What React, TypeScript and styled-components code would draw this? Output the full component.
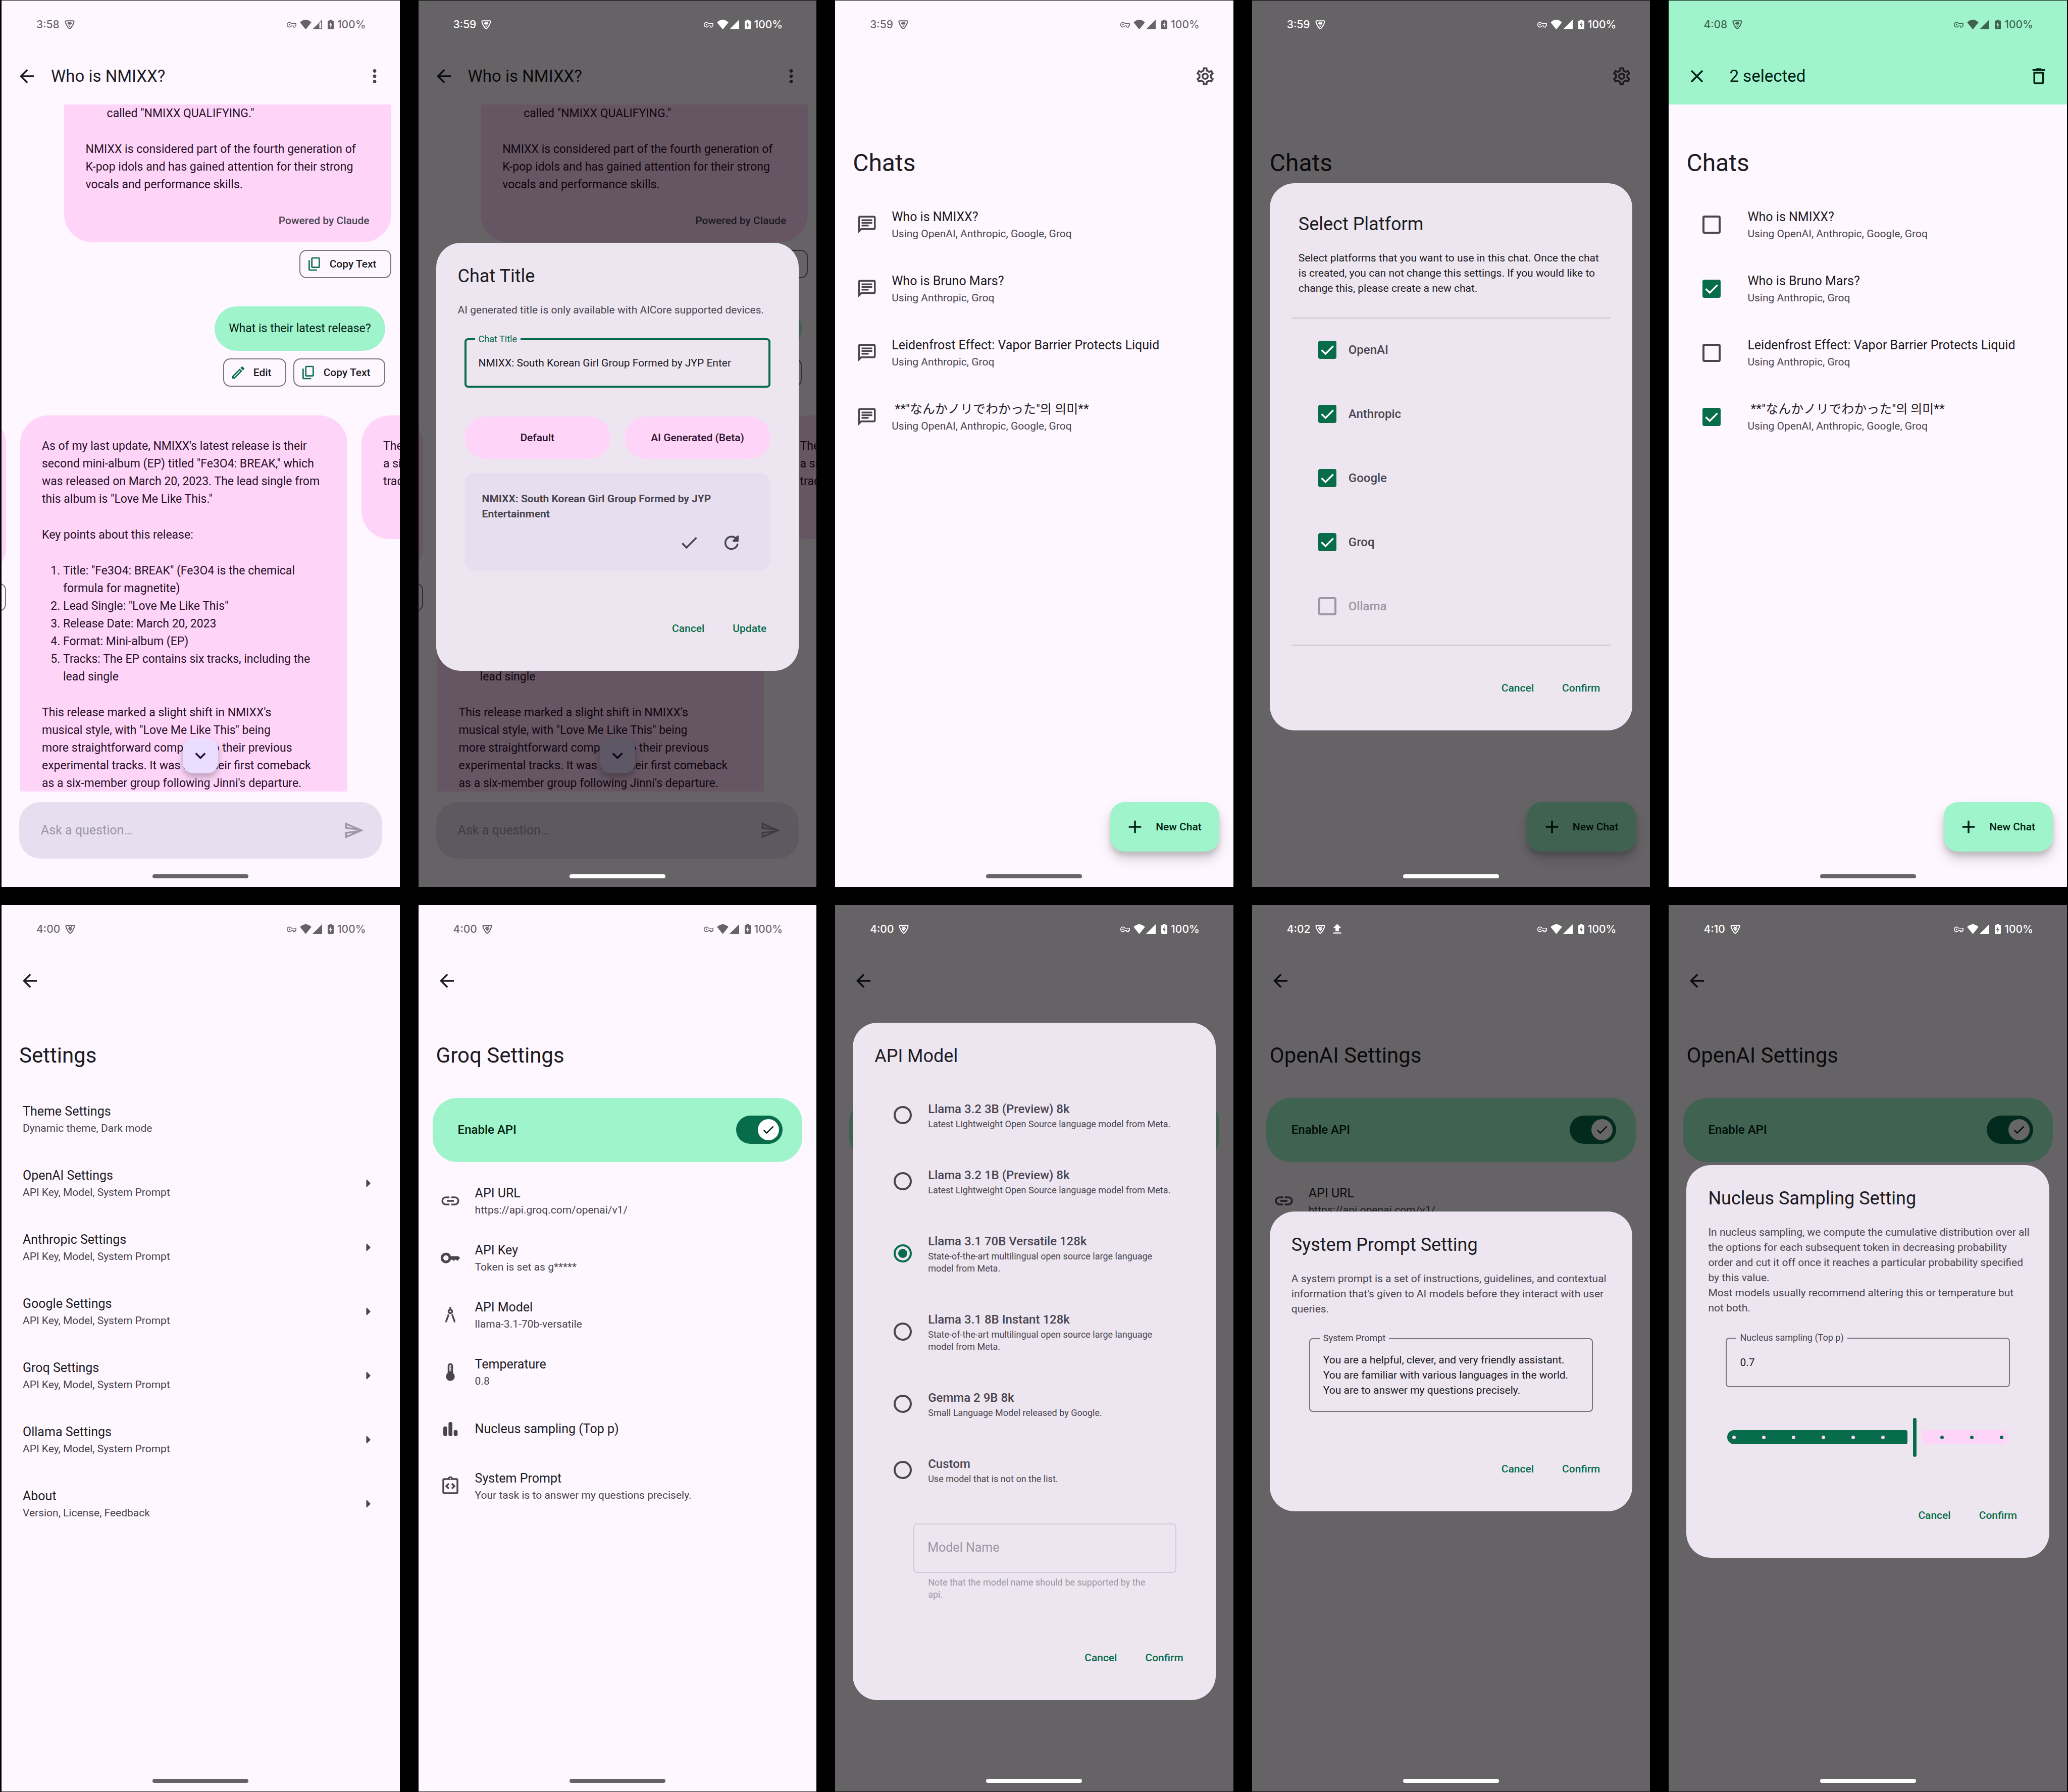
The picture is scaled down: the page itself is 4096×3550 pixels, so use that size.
import React, { useId } from 'react';
import styled, { createGlobalStyle, css } from 'styled-components';
import {
  MdAdd, MdArchitecture, MdArrowBack, MdCheck, MdClose,
  MdKeyboardArrowDown, MdLink, MdMoreVert, MdOutlineChat, MdOutlineDelete, MdOutlineEdit,
  MdOutlineIntegrationInstructions, MdOutlineSend, MdOutlineSettings, MdFileUpload,
} from 'react-icons/md';

const color = {
  surface: '#fef7ff',
  dialog: '#ede6f0',
  field: '#e7dfef',
  ink: '#1c1b1f',
  inkSoft: '#49454f',
  outline: '#79747e',
  divider: '#cac4d0',
  faint: '#9d96a4',
  primary: '#076c4a',
  mint: '#9ff4cb',
  onMint: '#002114',
  pink: '#fed5f8',
  onPink: '#29112a',
  lilac: '#eaddff',
};

const Global = createGlobalStyle`
  *, *::before, *::after { box-sizing: border-box; }
  body { margin: 0; background: #000; color: ${color.ink}; font-family: Roboto, 'Noto Sans CJK JP', 'Noto Sans CJK KR', sans-serif; }
  h1, h2, p, ul, ol { margin: 0; padding: 0; font-weight: 400; }
  button, input, textarea { font: inherit; color: inherit; border: 0; background: none; padding: 0; margin: 0; }
  svg { display: block; flex: none; }
`;

/* ---------- type ---------- */
const body = css`font-size: 23px; line-height: 35px;`;
const title = css`font-size: 25px; line-height: 36px;`;
const label = css`font-size: 21px; line-height: 30px; font-weight: 500;`;
const support = css`font-size: 21px; line-height: 30px;`;
const small = css`font-size: 18px; line-height: 24px;`;

/* ---------- frame ---------- */
const Gallery = styled.main`
  min-height: 100vh;
  padding: 1px 2px 1px 3px;
  display: grid;
  grid-template-columns: repeat(5, minmax(0, 1fr));
  grid-auto-rows: 1fr;
  gap: 36px 37px;
`;
const Phone = styled.section`
  position: relative;
  display: flex;
  flex-direction: column;
  overflow: hidden;
  background: ${color.surface};
`;
const Status = styled.header<{ $light?: boolean; $tint?: boolean }>`
  position: relative;
  z-index: 2;
  height: 94px;
  padding: 1px 67px 0 69px;
  display: flex;
  align-items: center;
  font: 500 21px Inter, sans-serif;
  color: ${p => (p.$light ? '#fff' : 'rgba(0, 0, 0, 0.6)')};
  background: ${p => (p.$tint ? color.mint : 'transparent')};
`;
const StatusLeft = styled.div`
  display: flex;
  align-items: center;
  gap: 10px;
  margin-right: auto;
`;
const StatusRight = styled.div`
  display: flex;
  align-items: center;
  gap: 7px;
`;
const SignalPair = styled.span`
  display: flex;
  align-items: center;
  gap: 2px;
  margin-right: 4px;
`;
const Content = styled.div`
  flex: 1;
  display: flex;
  flex-direction: column;
`;
const Nav = styled.footer<{ $light?: boolean }>`
  position: relative;
  z-index: 2;
  height: 42px;
  display: grid;
  place-items: center;
  &::after {
    content: '';
    width: 190px;
    height: 8px;
    border-radius: 4px;
    background: ${p => (p.$light ? '#fff' : '#666366')};
  }
`;
const Scrim = styled.div`
  position: absolute;
  inset: 0;
  z-index: 1;
  padding: 94px 35px 42px;
  display: flex;
  align-items: center;
  background: rgba(0, 0, 0, 0.6);
`;

/* ---------- drawn icons ---------- */
type IconProps = { size?: number };
const VpnShield = () => (
  <svg width="20" height="20" viewBox="0 0 24 24" fill="none" stroke="currentColor" strokeWidth="2.4" strokeLinejoin="round">
    <path d="M3.600 2.600h16.800c1.600 0 2.300 1 1.800 2.500-1.900 6.800-4.700 12-9 16-.8.7-1.600.7-2.400 0-4.300-4-7.100-9.200-9-16-.5-1.500.2-2.500 1.800-2.500z" />
    <path d="M8.500 5l1.300 2.200h4.400L15.500 5M7 9.300h10M8.500 12.500h7M10.500 15.500h3" strokeWidth="2.100" />
  </svg>
);
const TunnelKey = () => (
  <svg width="19" height="12" viewBox="0 0 26 16" fill="none" stroke="currentColor" strokeWidth="2.200" strokeLinejoin="round">
    <path d="M12.800 5A6.300 6.300 0 1 0 12.800 11H17.500v3.500h5V11h2.300V5z" />
    <circle cx="7.300" cy="8" r="2" fill="currentColor" stroke="none" />
  </svg>
);
const Wifi = () => (
  <svg width="23" height="19" viewBox="0 0 32 27" fill="currentColor">
    <path d="M.6 6.600Q16-6.800 31.400 6.600q.8.800.1 1.700L17 26.300q-1 1-2 0L.5 8.300q-.7-.9.1-1.700z" />
  </svg>
);
const Cell = ({ weak }: { weak?: boolean }) => (
  <svg width="19" height="19" viewBox="0 0 26 26" fill="currentColor" fillRule="evenodd">
    <path d={weak ? 'M0 26L26 0V26zM18.500 10v13.500h5V5z' : 'M0 26L26 0V26z'} />
  </svg>
);
const Battery = () => (
  <svg width="12" height="19" viewBox="0 0 17 27" fill="currentColor" fillRule="evenodd">
    <path d="M5 0h7v2.500h3a2 2 0 0 1 2 2V25a2 2 0 0 1-2 2H2a2 2 0 0 1-2-2V4.500a2 2 0 0 1 2-2h3zM9.300 6.200L4.200 15.600h3.300V23l5-9.400H9.300z" />
  </svg>
);
const CopyIcon = ({ size = 32 }: IconProps) => (
  <svg width={size} height={size} viewBox="0 0 24 24" fill="currentColor" fillRule="evenodd">
    <path d="M9 2h9a2 2 0 0 1 2 2v12a2 2 0 0 1-2 2H9a2 2 0 0 1-2-2V4a2 2 0 0 1 2-2zm0 2v12h9V4zM4 6a1 1 0 0 1 1 1v13h10a1 1 0 0 1 0 2H5a2 2 0 0 1-2-2V7a1 1 0 0 1 1-1z" />
  </svg>
);
const RefreshIcon = ({ size = 42 }: IconProps) => (
  <svg width={size} height={size} viewBox="0 0 24 24" fill="none" stroke="currentColor" strokeWidth="2" strokeLinecap="round">
    <path d="M18.300 9.200A7 7 0 1 0 18.700 14" />
    <path d="M20 4.800v5.200a1 1 0 0 1-1 1h-5c-.9 0-1.300-1-.7-1.600l5-5.200c.6-.6 1.700-.2 1.700.6z" fill="currentColor" stroke="none" />
  </svg>
);
const KeyIcon = ({ size = 42 }: IconProps) => (
  <svg width={size} height={size} viewBox="0 0 24 24" fill="currentColor" fillRule="evenodd">
    <path d="M7 6a6 6 0 0 1 5.650 4H21l2 2-3 3.300-2-1.600-2 1.600-2-1.300h-1.350A6 6 0 1 1 7 6zm0 3a3 3 0 1 0 0 6 3 3 0 0 0 0-6z" />
  </svg>
);
const ThermoIcon = ({ size = 42 }: IconProps) => (
  <svg width={size} height={size} viewBox="0 0 24 24" fill="currentColor" fillRule="evenodd">
    <path d="M12 2a3 3 0 0 1 3 3v8a5 5 0 1 1-6 0V5a3 3 0 0 1 3-3zm-1 3v6h2v-1h-1V9h1V7h-1V6h1V5a1 1 0 0 0-2 0z" />
  </svg>
);
const BarsIcon = ({ size = 42 }: IconProps) => (
  <svg width={size} height={size} viewBox="0 0 24 24" fill="currentColor">
    <rect x="4" y="9" width="4.400" height="11" rx="2" />
    <rect x="9.900" y="4" width="4.400" height="16" rx="2" />
    <rect x="15.800" y="13" width="4.400" height="7" rx="2" />
  </svg>
);
const ForwardIcon = ({ size = 42 }: IconProps) => (
  <svg width={size} height={size} viewBox="0 0 24 24" fill="currentColor">
    <path d="M10 15.600V8.400c0-.5.600-.7.900-.4l3.500 3.500c.3.300.3.700 0 1l-3.500 3.500c-.3.300-.9.100-.9-.4z" />
  </svg>
);

/* ---------- app bars ---------- */
const AppBar = styled.div<{ $inset?: number; $tint?: boolean }>`
  height: 112px;
  padding: 0 ${p => p.$inset ?? 14}px;
  display: flex;
  align-items: center;
  background: ${p => (p.$tint ? color.mint : 'transparent')};
  color: ${p => (p.$tint ? color.onMint : color.ink)};
`;
const BarTitle = styled.h1<{ $gap: number }>`
  flex: 1;
  margin-left: ${p => p.$gap}px;
  font-size: 33px;
  line-height: 48px;
`;
const IconButton = styled.button<{ $push?: boolean; $soft?: boolean }>`
  width: 84px;
  height: 84px;
  display: grid;
  place-items: center;
  margin-left: ${p => (p.$push ? 'auto' : '0')};
  color: ${p => (p.$soft ? color.inkSoft : 'inherit')};
`;
const HomeTitle = styled.h1`
  padding: 86px 35px 28px;
  font-size: 48px;
  line-height: 60px;
`;
const SettingsTitle = styled.h1`
  padding: 65px 35px 35px;
  font-size: 42px;
  line-height: 54px;
`;

/* ---------- rows ---------- */
const List = styled.ul<{ $top?: number }>`
  list-style: none;
  padding-top: ${p => p.$top ?? 0}px;
`;
const Row = styled.li<{ $height: number }>`
  min-height: ${p => p.$height}px;
  padding: 0 42px;
  display: flex;
  align-items: center;
  gap: 28px;
  color: ${color.inkSoft};
`;
const RowText = styled.div`
  flex: 1;
  display: flex;
  flex-direction: column;
`;
const RowTitle = styled.span`
  ${title}
  color: ${color.ink};
  white-space: pre;
`;
const RowSupport = styled.span`
  ${support}
`;

/* ---------- controls ---------- */
const Overlay = styled.span<{ $wide?: boolean }>`
  display: grid;
  place-items: center;
  width: ${p => (p.$wide ? '86px' : '36px')};
  & > * { grid-area: 1 / 1; }
  svg { pointer-events: none; }
`;
const Tick = styled.input`
  appearance: none;
  width: 36px;
  height: 36px;
  border: 4px solid ${color.inkSoft};
  border-radius: 4px;
  &:checked { background: ${color.primary}; border-color: ${color.primary}; }
  &:disabled { border-color: ${color.faint}; }
`;
const CheckMark = () => (
  <svg width="36" height="36" viewBox="0 0 20 20" fill="none" stroke="#fff" strokeWidth="1.900">
    <path d="M3.600 10.200l4.400 4.200 8.500-8.500" />
  </svg>
);
const CheckBox = ({ id, checked, disabled, wide }: { id: string; checked: boolean; disabled?: boolean; wide?: boolean }) => (
  <Overlay $wide={wide}>
    <Tick type="checkbox" id={id} defaultChecked={checked} disabled={disabled} />
    {checked && <CheckMark />}
  </Overlay>
);
const RadioDot = styled.input`
  appearance: none;
  flex: none;
  width: 36px;
  height: 36px;
  padding: 5px;
  border: 4px solid ${color.inkSoft};
  border-radius: 50%;
  background-clip: content-box;
  &:checked { border-color: ${color.primary}; background-color: ${color.primary}; }
`;
const SwitchBox = styled.span`
  display: grid;
  align-items: center;
  & > * { grid-area: 1 / 1; }
`;
const SwitchTrack = styled.input`
  appearance: none;
  width: 92px;
  height: 56px;
  border-radius: 28px;
  background: ${color.primary};
`;
const SwitchThumb = styled.span`
  width: 42px;
  height: 42px;
  margin-right: 7px;
  justify-self: end;
  display: grid;
  place-items: center;
  border-radius: 50%;
  background: #fff;
  color: ${color.onMint};
  pointer-events: none;
`;
const EnableCard = styled.div`
  margin: 22px 28px 0;
  height: 127px;
  padding: 0 39px 1px 50px;
  display: flex;
  align-items: center;
  justify-content: space-between;
  border-radius: 49px;
  background: ${color.mint};
  color: ${color.onMint};
  font-size: 24px;
  font-weight: 500;
`;
const FabButton = styled.button`
  align-self: flex-end;
  margin: auto 28px 28px 0;
  height: 98px;
  padding: 0 35px 0 28px;
  display: flex;
  align-items: center;
  gap: 20px;
  border-radius: 28px;
  background: ${color.mint};
  color: ${color.onMint};
  box-shadow: 0 14px 24px rgba(0, 0, 0, 0.17), 0 8px 10px rgba(0, 0, 0, 0.12);
  ${label}
`;

/* ---------- chat ---------- */
const Thread = styled.div`
  position: relative;
  flex: 1;
  contain: size;
  overflow: hidden;
  margin-bottom: 21px;
`;
const Bubble = styled.article<{ $cut?: boolean; $long?: boolean }>`
  flex: none;
  width: 648px;
  padding: ${p => (p.$cut ? 0 : 43)}px 43px ${p => (p.$long ? 168 : 28)}px;
  border-radius: ${p => (p.$cut ? '0 0 56px 56px' : '56px')};
  background: ${color.pink};
  color: ${color.onPink};
  ${body}
  white-space: pre;
  ol { padding-left: 42px; }
  p + p, p + ol, ol + p { margin-top: 36px; }
`;
const Continued = styled.p`
  padding-left: 42px;
`;
const Credit = styled.footer`
  margin-top: 39px;
  text-align: right;
  color: ${color.inkSoft};
  ${label}
`;
const Outgoing = styled.div<{ $right: number; $bottom: number }>`
  display: flex;
  flex-direction: column;
  align-items: flex-end;
  gap: 15px;
  padding-right: ${p => p.$right}px;
  margin-bottom: ${p => p.$bottom}px;
`;
const Question = styled.p`
  padding: 26px 28px;
  border-radius: 44px;
  background: ${color.mint};
  color: ${color.onMint};
  font-size: 23px;
  line-height: 36px;
`;
const Chips = styled.div`
  display: flex;
  gap: 14px;
`;
const Chip = styled.button`
  height: 56px;
  padding: 0 27px 0 12px;
  display: flex;
  align-items: center;
  gap: 14px;
  border: 2px solid ${color.outline};
  border-radius: 14px;
  svg { color: ${color.primary}; }
  ${label}
`;
const Pager = styled.div`
  display: flex;
  align-items: flex-start;
  gap: 28px;
  margin-left: -639px;
`;
const Page = styled.div`
  flex: none;
  width: 648px;
  display: flex;
  flex-direction: column;
  align-items: flex-end;
  gap: 15px;
`;
const BlankBubble = styled(Bubble)`
  height: 317px;
`;
const ScrollDown = styled.button`
  position: absolute;
  left: 50%;
  bottom: 36px;
  width: 70px;
  height: 70px;
  margin-left: -35px;
  display: grid;
  place-items: center;
  border-radius: 21px;
  background: ${color.lilac};
  color: #21103f;
  box-shadow: 0 8px 14px rgba(0, 0, 0, 0.25);
`;
const Composer = styled.form`
  height: 112px;
  margin: 0 35px 14px;
  padding: 0 35px 0 43px;
  display: flex;
  align-items: center;
  border-radius: 42px;
  background: ${color.field};
  color: ${color.faint};
  input { flex: 1; min-width: 0; ${title} }
  input::placeholder { color: ${color.faint}; opacity: 1; }
`;

/* ---------- dialogs ---------- */
const Dialog = styled.div`
  flex: 1;
  min-width: 0;
  padding: 42px 43px;
  border-radius: 49px;
  background: ${color.dialog};
  color: ${color.inkSoft};
`;
const DialogTitle = styled.h2<{ $pad?: boolean }>`
  margin: ${p => (p.$pad ? '15px 14px 28px' : '0 0 28px')};
  font-size: 36px;
  line-height: 48px;
  color: ${color.ink};
`;
const DialogText = styled.p<{ $pad?: boolean; $gap?: number }>`
  ${support}
  white-space: pre;
  margin: 0 ${p => (p.$pad ? 14 : 0)}px ${p => p.$gap ?? 43}px;
  color: ${p => (p.$pad ? color.ink : color.inkSoft)};
`;
const Actions = styled.div<{ $top: number }>`
  margin-top: ${p => p.$top}px;
  display: flex;
  justify-content: flex-end;
  gap: 14px;
`;
const TextButton = styled.button`
  height: 84px;
  padding: 0 21px;
  color: ${color.primary};
  ${label}
`;
const FieldBox = styled.div<{ $left: number; $right: number; $active?: boolean; $off?: boolean }>`
  position: relative;
  display: flex;
  margin: 0 ${p => p.$right}px 0 ${p => p.$left}px;
  min-height: 98px;
  padding: ${p => (p.$active ? 24 : 26)}px;
  border: ${p => (p.$active ? 4 : 2)}px solid ${p => (p.$active ? color.primary : p.$off ? '#d3ccd8' : color.outline)};
  border-radius: 7px;
  label {
    position: absolute;
    top: -14px;
    left: ${p => (p.$active ? 17 : 19)}px;
    padding: 0 7px;
    background: ${color.dialog};
    color: ${p => (p.$active ? color.primary : color.inkSoft)};
    ${small}
  }
  input, textarea {
    flex: 1;
    min-width: 0;
    resize: none;
    overflow: hidden;
    color: ${color.ink};
    outline: none;
    ${support}
  }
  input::placeholder { color: ${color.faint}; opacity: 1; font-size: 25px; }
`;
const Helper = styled.p`
  margin: 7px 35px 0 106px;
  color: ${color.faint};
  ${small}
`;
const Pair = styled.div`
  display: grid;
  grid-template-columns: 1fr 1fr;
  gap: 28px;
  margin: 57px 13px 28px;
`;
const TonalButton = styled.button`
  height: 84px;
  border-radius: 42px;
  background: ${color.pink};
  color: ${color.onPink};
  ${label}
`;
const Suggestion = styled.div`
  margin: 0 13px;
  padding: 36px 35px 14px;
  border-radius: 21px;
  background: ${color.field};
  ${support}
  font-weight: 700;
  white-space: pre;
`;
const SuggestionActions = styled.div`
  display: flex;
  justify-content: flex-end;
`;
const Rule = styled.hr`
  height: 2px;
  margin: 0;
  border: 0;
  background: ${color.divider};
`;
const Platforms = styled.ul`
  list-style: none;
  padding: 0 0 11px 53px;
`;
const Platform = styled.li<{ $off?: boolean }>`
  height: 127px;
  padding-bottom: 4px;
  display: flex;
  align-items: center;
  gap: 24px;
  font-size: 24px;
  font-weight: 500;
  color: ${p => (p.$off ? color.faint : color.inkSoft)};
`;
const Models = styled.ul`
  list-style: none;
  margin-bottom: 40px;
`;
const Model = styled.li`
  padding: 35px 0 36px 38px;
  display: flex;
  align-items: center;
  gap: 32px;
  label { display: flex; flex-direction: column; }
`;
const ModelName = styled.span`
  font-size: 24px;
  line-height: 36px;
  font-weight: 500;
`;
const ModelNote = styled.span`
  ${small}
  white-space: pre;
`;
const SliderBox = styled.div`
  position: relative;
  height: 84px;
  margin: 57px 38px 0;
  display: grid;
  grid-template-columns: 356fr 7px 171fr;
  align-items: center;
  gap: 11px;
  input { position: absolute; inset: 0; width: 100%; opacity: 0; }
`;
const Track = styled.span<{ $active?: boolean }>`
  height: 28px;
  padding: 0 10px;
  display: flex;
  align-items: center;
  gap: 52px;
  justify-content: ${p => (p.$active ? 'flex-start' : 'flex-end')};
  border-radius: ${p => (p.$active ? '14px 4px 4px 14px' : '4px 14px 14px 4px')};
  background: ${p => (p.$active ? color.primary : color.pink)};
  color: ${p => (p.$active ? color.pink : color.primary)};
`;
const Stop = styled.i`
  width: 7px;
  height: 7px;
  border-radius: 50%;
  background: currentColor;
`;
const Handle = styled.span`
  height: 77px;
  border-radius: 4px;
  background: ${color.primary};
`;

/* ---------- composed parts ---------- */
type ShellProps = {
  time: string;
  light?: boolean;
  tint?: boolean;
  upload?: boolean;
  weak?: boolean;
  dialog?: React.ReactNode;
  children: React.ReactNode;
};
const Shell = ({ time, light, tint, upload, weak, dialog, children }: ShellProps) => (
  <Phone>
    <Status $light={light} $tint={tint}>
      <StatusLeft>
        {time}
        <VpnShield />
        {upload && <MdFileUpload size={27} />}
      </StatusLeft>
      <StatusRight>
        <TunnelKey />
        <SignalPair>
          <Wifi />
          <Cell weak={weak} />
        </SignalPair>
        <Battery />
        100%
      </StatusRight>
    </Status>
    <Content>{children}</Content>
    <Nav $light={light} />
    {dialog && <Scrim>{dialog}</Scrim>}
  </Phone>
);

const DialogActions = ({ top, confirm = 'Confirm' }: { top: number; confirm?: string }) => (
  <Actions $top={top}>
    <TextButton type="button">Cancel</TextButton>
    <TextButton type="button">{confirm}</TextButton>
  </Actions>
);

const CopyChip = () => (
  <Chip type="button"><CopyIcon />Copy Text</Chip>
);

const ChatScreen = () => (
  <>
    <AppBar $inset={8}>
      <IconButton type="button" aria-label="Back"><MdArrowBack size={42} /></IconButton>
      <BarTitle $gap={6}>Who is NMIXX?</BarTitle>
      <IconButton type="button" aria-label="More" $soft><MdMoreVert size={42} /></IconButton>
    </AppBar>
    <Thread>
      <Outgoing $right={17} $bottom={56}>
        <Bubble $cut>
          <Continued>called "NMIXX QUALIFYING."</Continued>
          <p>{'NMIXX is considered part of the fourth generation of\nK-pop idols and has gained attention for their strong\nvocals and performance skills.'}</p>
          <Credit>Powered by Claude</Credit>
        </Bubble>
        <CopyChip />
      </Outgoing>
      <Outgoing $right={29} $bottom={57}>
        <Question>What is their latest release?</Question>
        <Chips>
          <Chip type="button"><MdOutlineEdit size={32} />Edit</Chip>
          <CopyChip />
        </Chips>
      </Outgoing>
      <Pager>
        <Page>
          <BlankBubble as="div" />
          <CopyChip />
        </Page>
        <Bubble $long>
          <p>{'As of my last update, NMIXX\'s latest release is their\nsecond mini-album (EP) titled "Fe3O4: BREAK," which\nwas released on March 20, 2023. The lead single from\nthis album is "Love Me Like This."'}</p>
          <p>Key points about this release:</p>
          <ol>
            <li>{'Title: "Fe3O4: BREAK" (Fe3O4 is the chemical\nformula for magnetite)'}</li>
            <li>Lead Single: "Love Me Like This"</li>
            <li>Release Date: March 20, 2023</li>
            <li>Format: Mini-album (EP)</li>
            <li>{'Tracks: The EP contains six tracks, including the\nlead single'}</li>
          </ol>
          <p>{'This release marked a slight shift in NMIXX\'s\nmusical style, with "Love Me Like This" being\nmore straightforward compared to their previous\nexperimental tracks. It was also their first comeback\nas a six-member group following Jinni\'s departure.'}</p>
        </Bubble>
        <Bubble>
          <p>{'The latest\na single\ntracks'}</p>
          <Credit>Powered by Gemini</Credit>
        </Bubble>
      </Pager>
      <ScrollDown type="button" aria-label="Scroll to bottom"><MdKeyboardArrowDown size={42} /></ScrollDown>
    </Thread>
    <Composer>
      <input type="text" placeholder="Ask a question…" aria-label="Ask a question" />
      <button type="button" aria-label="Send"><MdOutlineSend size={42} /></button>
    </Composer>
  </>
);

const chats = [
  { name: 'Who is NMIXX?', using: 'Using OpenAI, Anthropic, Google, Groq', picked: false },
  { name: 'Who is Bruno Mars?', using: 'Using Anthropic, Groq', picked: true },
  { name: 'Leidenfrost Effect: Vapor Barrier Protects Liquid', using: 'Using Anthropic, Groq', picked: false },
  { name: ' **"なんかノリでわかった"의 의미**', using: 'Using OpenAI, Anthropic, Google, Groq', picked: true },
];

const HomeScreen = ({ selecting }: { selecting?: boolean }) => {
  const id = useId();
  return (
    <>
      <AppBar $tint={selecting}>
        {selecting ? (
          <>
            <IconButton type="button" aria-label="Close"><MdClose size={42} /></IconButton>
            <BarTitle $gap={22}>2 selected</BarTitle>
            <IconButton type="button" aria-label="Delete"><MdOutlineDelete size={42} /></IconButton>
          </>
        ) : (
          <IconButton type="button" aria-label="Settings" $push $soft><MdOutlineSettings size={42} /></IconButton>
        )}
      </AppBar>
      <HomeTitle>Chats</HomeTitle>
      <List>
        {chats.map((chat, i) => (
          <Row key={chat.name} $height={127}>
            {selecting ? <CheckBox id={id + i} checked={chat.picked} wide /> : <MdOutlineChat size={42} />}
            <RowText as={selecting ? 'label' : 'div'} {...(selecting ? { htmlFor: id + i } : {})}>
              <RowTitle>{chat.name}</RowTitle>
              <RowSupport>{chat.using}</RowSupport>
            </RowText>
          </Row>
        ))}
      </List>
      <FabButton type="button"><MdAdd size={42} />New Chat</FabButton>
    </>
  );
};

const BackBar = () => (
  <AppBar>
    <IconButton type="button" aria-label="Back"><MdArrowBack size={42} /></IconButton>
  </AppBar>
);

const settings = [
  ['Theme Settings', 'Dynamic theme, Dark mode'],
  ['OpenAI Settings', 'API Key, Model, System Prompt'],
  ['Anthropic Settings', 'API Key, Model, System Prompt'],
  ['Google Settings', 'API Key, Model, System Prompt'],
  ['Groq Settings', 'API Key, Model, System Prompt'],
  ['Ollama Settings', 'API Key, Model, System Prompt'],
  ['About', 'Version, License, Feedback'],
];

const SettingsScreen = () => (
  <>
    <BackBar />
    <SettingsTitle>Settings</SettingsTitle>
    <List>
      {settings.map(([name, note], i) => (
        <Row key={name} $height={127}>
          <RowText>
            <RowTitle>{name}</RowTitle>
            <RowSupport>{note}</RowSupport>
          </RowText>
          {i > 0 && <ForwardIcon />}
        </Row>
      ))}
    </List>
  </>
);

const PlatformScreen = ({ name, url }: { name: string; url: string }) => {
  const id = useId();
  const rows: [React.ReactNode, string, string?][] = [
    [<MdLink size={42} />, 'API URL', url],
    [<KeyIcon />, 'API Key', 'Token is set as g*****'],
    [<MdArchitecture size={42} />, 'API Model', 'llama-3.1-70b-versatile'],
    [<ThermoIcon />, 'Temperature', '0.8'],
    [<BarsIcon />, 'Nucleus sampling (Top p)'],
    [<MdOutlineIntegrationInstructions size={42} />, 'System Prompt', 'Your task is to answer my questions precisely.'],
  ];
  return (
    <>
      <BackBar />
      <SettingsTitle>{name} Settings</SettingsTitle>
      <EnableCard>
        <label htmlFor={id}>Enable API</label>
        <SwitchBox>
          <SwitchTrack type="checkbox" role="switch" id={id} defaultChecked />
          <SwitchThumb><MdCheck size={28} /></SwitchThumb>
        </SwitchBox>
      </EnableCard>
      <List $top={20}>
        {rows.map(([icon, rowName, note]) => (
          <Row key={rowName} $height={113}>
            {icon}
            <RowText>
              <RowTitle>{rowName}</RowTitle>
              {note && <RowSupport>{note}</RowSupport>}
            </RowText>
          </Row>
        ))}
      </List>
    </>
  );
};

const ChatTitleDialog = () => {
  const id = useId();
  return (
    <Dialog role="dialog" aria-label="Chat Title">
      <DialogTitle>Chat Title</DialogTitle>
      <DialogText $gap={41}>AI generated title is only available with AICore supported devices.</DialogText>
      <FieldBox $left={13} $right={13} $active>
        <label htmlFor={id}>Chat Title</label>
        <input id={id} type="text" defaultValue="NMIXX: South Korean Girl Group Formed by JYP Enter" />
      </FieldBox>
      <Pair>
        <TonalButton type="button">Default</TonalButton>
        <TonalButton type="button">AI Generated (Beta)</TonalButton>
      </Pair>
      <Suggestion>
        {'NMIXX: South Korean Girl Group Formed by JYP\nEntertainment'}
        <SuggestionActions>
          <IconButton type="button" aria-label="Use title"><MdCheck size={42} /></IconButton>
          <IconButton type="button" aria-label="Generate again"><RefreshIcon /></IconButton>
        </SuggestionActions>
      </Suggestion>
      <DialogActions top={72} confirm="Update" />
    </Dialog>
  );
};

const PlatformDialog = () => {
  const id = useId();
  return (
    <Dialog role="dialog" aria-label="Select Platform">
      <DialogTitle $pad>Select Platform</DialogTitle>
      <DialogText $pad>{'Select platforms that you want to use in this chat. Once the chat\nis created, you can not change this settings. If you would like to\nchange this, please create a new chat.'}</DialogText>
      <Rule />
      <Platforms>
        {['OpenAI', 'Anthropic', 'Google', 'Groq', 'Ollama'].map(name => (
          <Platform key={name} $off={name === 'Ollama'}>
            <CheckBox id={id + name} checked={name !== 'Ollama'} disabled={name === 'Ollama'} />
            <label htmlFor={id + name}>{name}</label>
          </Platform>
        ))}
      </Platforms>
      <Rule />
      <DialogActions top={42} />
    </Dialog>
  );
};

const models = [
  ['Llama 3.2 3B (Preview) 8k', 'Latest Lightweight Open Source language model from Meta.'],
  ['Llama 3.2 1B (Preview) 8k', 'Latest Lightweight Open Source language model from Meta.'],
  ['Llama 3.1 70B Versatile 128k', 'State-of-the-art multilingual open source large language\nmodel from Meta.'],
  ['Llama 3.1 8B Instant 128k', 'State-of-the-art multilingual open source large language\nmodel from Meta.'],
  ['Gemma 2 9B 8k', 'Small Language Model released by Google.'],
  ['Custom', 'Use model that is not on the list.'],
];

const ModelDialog = () => {
  const id = useId();
  return (
    <Dialog role="dialog" aria-label="API Model">
      <DialogTitle>API Model</DialogTitle>
      <Models>
        {models.map(([name, note], i) => (
          <Model key={name}>
            <RadioDot type="radio" name={id} id={id + i} defaultChecked={i === 2} />
            <label htmlFor={id + i}>
              <ModelName>{name}</ModelName>
              <ModelNote>{note}</ModelNote>
            </label>
          </Model>
        ))}
      </Models>
      <FieldBox $left={77} $right={35} $off>
        <input type="text" placeholder="Model Name" aria-label="Model Name" disabled />
      </FieldBox>
      <Helper>Note that the model name should be supported by the<br />api.</Helper>
      <DialogActions top={71} />
    </Dialog>
  );
};

const PromptDialog = () => {
  const id = useId();
  return (
    <Dialog role="dialog" aria-label="System Prompt Setting">
      <DialogTitle>System Prompt Setting</DialogTitle>
      <DialogText>{"A system prompt is a set of instructions, guidelines, and contextual\ninformation that's given to AI models before they interact with user\nqueries."}</DialogText>
      <FieldBox $left={35} $right={35}>
        <label htmlFor={id}>System Prompt</label>
        <textarea id={id} rows={3} defaultValue={'You are a helpful, clever, and very friendly assistant.\nYou are familiar with various languages in the world.\nYou are to answer my questions precisely.'} />
      </FieldBox>
      <DialogActions top={71} />
    </Dialog>
  );
};

const NucleusDialog = () => {
  const id = useId();
  return (
    <Dialog role="dialog" aria-label="Nucleus Sampling Setting">
      <DialogTitle>Nucleus Sampling Setting</DialogTitle>
      <DialogText $gap={44}>{'In nucleus sampling, we compute the cumulative distribution over all\nthe options for each subsequent token in decreasing probability\norder and cut it off once it reaches a particular probability specified\nby this value.\nMost models usually recommend altering this or temperature but\nnot both.'}</DialogText>
      <FieldBox $left={35} $right={35}>
        <label htmlFor={id}>Nucleus sampling (Top p)</label>
        <input id={id} type="text" defaultValue="0.7" />
      </FieldBox>
      <SliderBox>
        <Track $active>{[1, 2, 3, 4, 5, 6].map(n => <Stop key={n} />)}</Track>
        <Handle />
        <Track>{[1, 2, 3].map(n => <Stop key={n} />)}</Track>
        <input type="range" min="0.1" max="1" step="0.1" defaultValue="0.7" aria-label="Top p" />
      </SliderBox>
      <DialogActions top={71} />
    </Dialog>
  );
};

export default function App() {
  return (
    <>
      <Global />
      <Gallery>
        <Shell time="3:58" weak><ChatScreen /></Shell>
        <Shell time="3:59" light dialog={<ChatTitleDialog />}><ChatScreen /></Shell>
        <Shell time="3:59"><HomeScreen /></Shell>
        <Shell time="3:59" light dialog={<PlatformDialog />}><HomeScreen /></Shell>
        <Shell time="4:08" tint><HomeScreen selecting /></Shell>
        <Shell time="4:00"><SettingsScreen /></Shell>
        <Shell time="4:00"><PlatformScreen name="Groq" url="https://api.groq.com/openai/v1/" /></Shell>
        <Shell time="4:00" light dialog={<ModelDialog />}><PlatformScreen name="Groq" url="https://api.groq.com/openai/v1/" /></Shell>
        <Shell time="4:02" light upload dialog={<PromptDialog />}><PlatformScreen name="OpenAI" url="https://api.openai.com/v1/" /></Shell>
        <Shell time="4:10" light dialog={<NucleusDialog />}><PlatformScreen name="OpenAI" url="https://api.openai.com/v1/" /></Shell>
      </Gallery>
    </>
  );
}
